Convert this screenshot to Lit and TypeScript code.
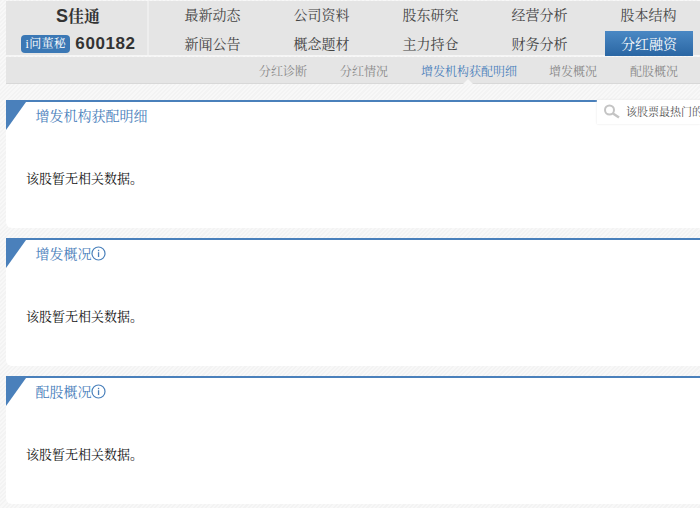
import { LitElement, html, css } from "lit";
import { customElement } from "lit/decorators.js";

const row1 = ["最新动态", "公司资料", "股东研究", "经营分析", "股本结构"];
const row2 = ["新闻公告", "概念题材", "主力持仓", "财务分析", "分红融资"];
const subs = ["分红诊断", "分红情况", "增发机构获配明细", "增发概况", "配股概况"];

@customElement("app-root")
export class AppRoot extends LitElement {
  static styles = css`
    :host {
      display: block;
      width: 700px;
      height: 508px;
      overflow: hidden;
      position: relative;
      font-family: "Liberation Serif", "Noto Serif CJK SC", "Noto Sans CJK SC", serif;
      background: repeating-linear-gradient(135deg, #f3f3f3 0 1.5px, #f8f8f8 1.5px 3px);
    }
    .page { padding: 1px 0 0 6px; display: flex; flex-direction: column; }
    .top { display: flex; height: 55px; background: #e5e5e5; border-bottom: 1px solid #f6f6f6; box-sizing: border-box; }
    .brand {
      width: 143px; flex: none; box-sizing: border-box; border-right: 2px solid #eeeeee;
      display: flex; flex-direction: column; align-items: center; color: #333;
    }
    .name { font-size: 16px; font-weight: bold; line-height: 20px; margin: 5px 0 0 3px; color: #333; }
    .name b { font-family: "Liberation Sans", sans-serif; font-size: 18px; }
    .code-row { display: flex; align-items: center; gap: 5px; margin-top: 8px; height: 18px; padding-left: 4px; }
    .badge {
      width: 49px; height: 18px; border-radius: 4px; background: #3b78b5; color: #fff;
      font-size: 12px; line-height: 18px; text-align: center; white-space: nowrap; letter-spacing: 0.3px;
    }
    .code { font-family: "Liberation Sans", sans-serif; font-weight: bold; font-size: 17px; color: #333; letter-spacing: 0.6px; }
    .nav { flex: 1; display: grid; grid-template-columns: repeat(5, 109px); grid-template-rows: 29px 26px; padding-left: 9px; }
    .nav span {
      font-size: 14px; line-height: 29px; text-align: center; color: #444; white-space: nowrap;
    }
    .nav span.low { line-height: 27px; margin-top: 1px; height: 25px; }
    .nav span.active {
      background: linear-gradient(#4a88c4, #2a66a3); color: #fff; margin: 1px 10px 0 11px;
    }
    .sub {
      display: flex; height: 27px; background: #e5e5e5; border-bottom: 1px solid #d8d8d8;
      box-sizing: border-box; margin-top: 1px; position: relative;
    }
    .sub span { position: absolute; top: 2px; font-size: 12px; line-height: 27px; color: #888; white-space: nowrap; }
    .sub span.on { color: #4a80bb; }
    .sub i {
      position: absolute; left: 457px; bottom: -1px; width: 0; height: 0;
      border: 5px solid transparent; border-top: 0; border-bottom-color: #f6f6f6;
    }
    .card {
      position: relative; height: 128px; background: #fff; border-top: 2px solid #4a80bb; box-sizing: border-box;
      border-radius: 0 0 0 6px; margin-bottom: 10px;
    }
    .cards { margin-top: 16px; }
    .corner { position: absolute; left: 0; top: 0; }
    .title {
      padding-left: 29.5px; font-size: 14px; height: 26px; color: #4a80bb; display: flex; align-items: center;
    }
    .title svg { margin: 0 0 0 -0.5px; }
    .empty { font-size: 13px; line-height: 18px; color: #111; padding: 42px 0 0 20px; }
    .search {
      position: absolute; left: 597px; top: 100px; width: 103px; height: 24px; background: #fff;
      box-shadow: 0 0 2px #e5e5e5; display: flex; align-items: center; white-space: nowrap; overflow: hidden;
      font-size: 11px; color: #555;
    }
    .search svg { margin: 0 6px 0 6px; flex: none; }
    .search span { margin: -2px 0 0 -1px; }
  `;

  private subPos = [253, 334, 415, 543, 624];

  private info() {
    return html`<svg width="15" height="15" viewBox="0 0 15 15"><circle cx="7.5" cy="7.5" r="6.5" fill="none" stroke="#4a80bb" stroke-width="1.2"/><rect x="6.9" y="6.2" width="1.3" height="4.8" fill="#4a80bb"/><rect x="6.9" y="3.8" width="1.3" height="1.4" fill="#4a80bb"/></svg>`;
  }

  private card(title: string, info: boolean) {
    return html`<div class="card">
      <svg class="corner" width="20" height="28" viewBox="0 0 20 28"><polygon points="0,0 20,0 0,28" fill="#4a80bb"/></svg>
      <div class="title">${title}${info ? this.info() : ""}</div>
      <div class="empty">该股暂无相关数据。</div>
    </div>`;
  }

  render() {
    return html`<div class="page">
        <div class="top">
          <div class="brand">
            <div class="name"><b>S</b>佳通</div>
            <div class="code-row"><span class="badge">i问董秘</span><span class="code">600182</span></div>
          </div>
          <div class="nav">
            ${row1.map((t) => html`<span>${t}</span>`)}
            ${row2.map((t, i) => html`<span class="low ${i === 4 ? "active" : ""}">${t}</span>`)}
          </div>
        </div>
        <div class="sub">
          ${subs.map((t, i) => html`<span class=${i === 2 ? "on" : ""} style="left:${this.subPos[i]}px">${t}</span>`)}
          <i></i>
        </div>
        <div class="cards">
          ${this.card("增发机构获配明细", false)}
          ${this.card("增发概况", true)}
          ${this.card("配股概况", true)}
        </div>
      </div>
      <div class="search">
        <svg width="18" height="16" viewBox="0 0 18 16"><circle cx="6.5" cy="6" r="4.5" fill="#fff" stroke="#c4c4c4" stroke-width="2"/><line x1="10" y1="9.5" x2="16" y2="13.5" stroke="#c4c4c4" stroke-width="2.5"/></svg>
        <span>该股票最热门的</span>
      </div>`;
  }
}
